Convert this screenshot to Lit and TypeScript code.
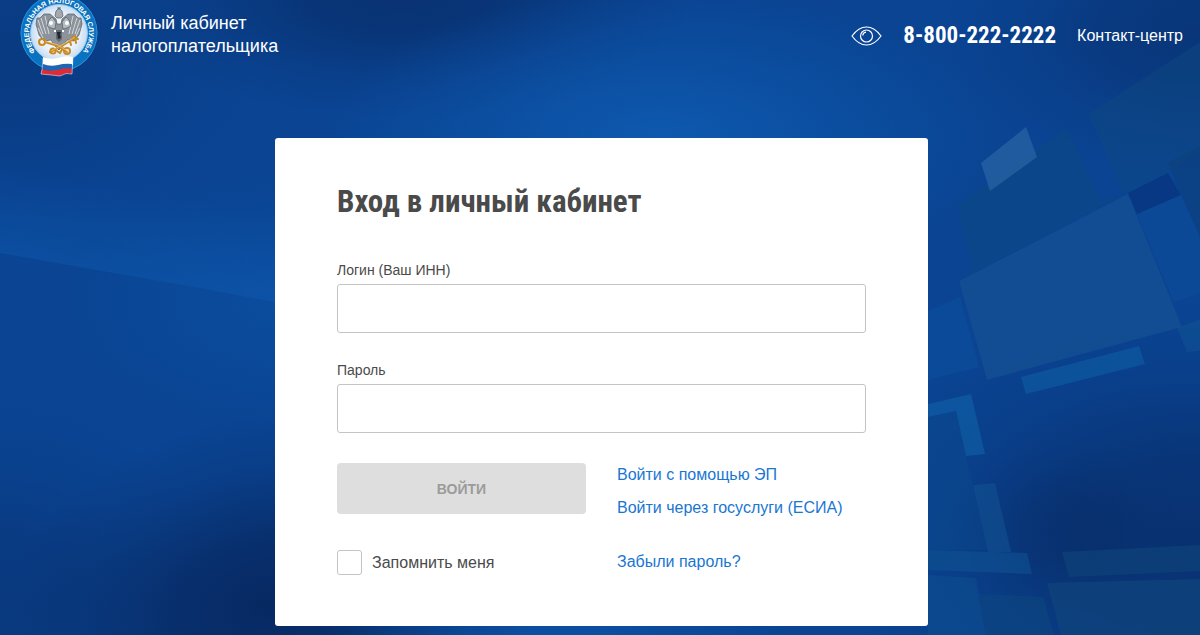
import { LitElement, html, css, svg } from "lit";
import { customElement, state } from "lit/decorators.js";

const shade = (points: string, fill: string, opacity: number) =>
  svg`<polygon points=${points} fill=${fill} fill-opacity=${opacity}></polygon>`;

@customElement("page-backdrop")
class PageBackdrop extends LitElement {
  static styles = css`
    :host {
      display: block;
      overflow: hidden;
      background: #0a4493;
    }
    .art {
      display: block;
      width: 100%;
      height: 100%;
    }
  `;

  render() {
    return html`<svg class="art" viewBox="0 0 1200 635" preserveAspectRatio="xMidYMid slice" aria-hidden="true">
      <defs>
        <radialGradient id="glow"><stop offset="0" stop-color="#0e5db4"></stop><stop offset=".5" stop-color="#0e5db4" stop-opacity=".5"></stop><stop offset="1" stop-color="#0e5db4" stop-opacity="0"></stop></radialGradient>
        <radialGradient id="dark"><stop offset="0" stop-color="#072459"></stop><stop offset=".35" stop-color="#072459" stop-opacity=".75"></stop><stop offset=".7" stop-color="#072459" stop-opacity=".25"></stop><stop offset="1" stop-color="#072459" stop-opacity="0"></stop></radialGradient>
        <linearGradient id="beam" gradientUnits="userSpaceOnUse" x1="150" y1="285" x2="166" y2="195"><stop offset="0" stop-color="#0e5db4" stop-opacity=".4"></stop><stop offset="1" stop-color="#0e5db4" stop-opacity="0"></stop></linearGradient>
      </defs>
      <rect width="1200" height="635" fill="#0a4493"></rect>
      <ellipse cx="0" cy="60" rx="260" ry="170" fill="url(#dark)" opacity=".3"></ellipse>
      <ellipse cx="400" cy="-10" rx="300" ry="130" fill="url(#dark)" opacity=".6"></ellipse>
      <ellipse cx="660" cy="140" rx="340" ry="150" fill="url(#glow)" opacity=".85"></ellipse>
      <ellipse cx="290" cy="300" rx="230" ry="130" fill="url(#glow)" opacity=".35"></ellipse>
      <ellipse cx="270" cy="605" rx="280" ry="190" fill="url(#dark)" opacity=".85" transform="rotate(-12 270 605)"></ellipse>
      <ellipse cx="0" cy="600" rx="220" ry="200" fill="url(#dark)" opacity=".35"></ellipse>
      <ellipse cx="560" cy="640" rx="240" ry="60" fill="url(#glow)" opacity=".5"></ellipse>
      <ellipse cx="1200" cy="30" rx="260" ry="150" fill="url(#dark)" opacity=".45"></ellipse>
      <ellipse cx="1190" cy="540" rx="360" ry="240" fill="url(#dark)" opacity=".6"></ellipse>
      <ellipse cx="1070" cy="530" rx="110" ry="90" fill="url(#dark)" opacity=".3"></ellipse>
      <polygon points="0,100 275,100 275,302 200,288 0,253" fill="url(#beam)"></polygon>
      ${shade("957,205 1067,128 1100,200 1124,194 959,281 973,270", "#0d4a80", 0.4)}
      ${shade("1088,114 1200,42 1200,150 1168,173 1124,194", "#104a80", 0.45)}
      ${shade("1128,193 1168,173 1181,195 1137,214", "#07307a", 0.6)}
      ${shade("1168,163 1200,146 1200,237 1181,195", "#0c4078", 0.5)}
      ${shade("1137,214 1181,195 1200,237 1200,293 1174,302", "#0c529a", 0.4)}
      ${shade("959,281 1128,194 1182,327 987,380", "#195594", 0.5)}
      ${shade("1177,328 1200,319 1200,351 1187,352", "#105494", 0.5)}
      ${shade("981,163 1026,127 1037,157 990,191", "#2e6aa6", 0.6)}
      ${shade("928,311 960,297 979,367 928,380", "#0d559f", 0.4)}
      ${shade("1021,377 1139,346 1145,364 1026,394", "#0e60a8", 0.55)}
      ${shade("928,404 971,394 985,454 966,456 956,411 928,417", "#0f62a8", 0.6)}
      ${shade("928,417 956,411 966,456 988,550 928,550", "#0c5090", 0.3)}
      ${shade("973,485 995,483 1011,552 988,552", "#115090", 0.65)}
      ${shade("928,550 1027,553 1032,574 928,570", "#0e5090", 0.65)}
      ${shade("928,575 976,578 986,635 928,635", "#0e5090", 0.5)}
      ${shade("979,594 1043,597 1054,635 986,635", "#0d467e", 0.6)}
      ${shade("1062,552 1200,545 1200,571 1069,577", "#0f4479", 0.65)}
      ${shade("1047,583 1200,579 1200,635 1061,635", "#0f457c", 0.7)}
    </svg>`;
  }
}

@customElement("service-emblem")
class ServiceEmblem extends LitElement {
  static styles = css`
    :host {
      display: block;
    }
    .emblem {
      display: block;
    }
    .ring {
      font: bold 7px "Liberation Sans", Arial, sans-serif;
      fill: #ffffff;
    }
  `;

  render() {
    return html`<svg class="emblem" width="79" height="77" viewBox="20 0 79 77" role="img" aria-label="Федеральная налоговая служба">
      <defs>
        <radialGradient id="disc"><stop offset="0" stop-color="#ffffff"></stop><stop offset=".7" stop-color="#e8f1fa"></stop><stop offset="1" stop-color="#c5dcf2"></stop></radialGradient>
        <path id="arc" d="M35.400 51.500 A 30 30 0 1 1 80 54.400"></path>
      </defs>
      <circle cx="59" cy="33" r="38.5" fill="#0a72c0"></circle>
      <circle cx="59" cy="33" r="38" fill="none" stroke="#2b8ed6"></circle>
      <circle cx="59" cy="33" r="28.5" fill="url(#disc)" stroke="#8fc3ea" stroke-width="1"></circle>
      <text class="ring"><textPath href="#arc">ФЕДЕРАЛЬНАЯ НАЛОГОВАЯ СЛУЖБА</textPath></text>
      <g fill="#8d939b" stroke="#555c66" stroke-width=".7" stroke-linejoin="round">
        <path d="M56 19 L50 14 L44 14 L40 18 L37 18 L36 24 L39 35 L44 41 L51 40 L55 46 L59 50 L63 46 L67 40 L74 41 L79 35 L82 24 L81 18 L78 18 L74 14 L68 14 L62 19 L61 24 L57 24Z"></path>
        <path d="M38 20 L43 34 M41 18 L46 34 M45 16 L49 34 M80 20 L75 34 M77 18 L72 34 M73 16 L69 34 M38 28 L43 38 M80 28 L75 38" stroke="#d5d9de" stroke-width="1" fill="none"></path>
        <path d="M49 20 L52 17 L56 22 L55 29 L51 28 L47 26Z M69 20 L66 17 L62 22 L63 29 L67 28 L71 26Z" fill="#b7bcc3"></path>
        <path d="M55 16 L56 11 L59 8 L62 11 L63 16 L61 18 L57 18Z M59 7 V10 M57 8 H61" fill="#a4a9b0"></path>
      </g>
      <g fill="#ffffff"><circle cx="51" cy="23" r="2"></circle><circle cx="67" cy="23" r="2"></circle><path d="M54 30 H57 V32 H54Z M61 30 H64 V32 H61Z M57 36 H60 V39 H57Z"></path></g>
      <path d="M56 30 H62 V39 L59 42 L56 39Z" fill="#656a72"></path>
      <path d="M57 32 L61 32 L60 34 L61 38 L58 39Z" fill="#22272f"></path>
      <g fill="none" stroke="#c98a24" stroke-width="2" stroke-linecap="round">
        <circle cx="42" cy="42" r="3"></circle><path d="M45 42 L58 46 L67 52 M50 52 L62 46 L75 38 M72 37 L78 39 M75 36 L76 43 M70 41 L71 45"></path>
        <circle cx="53" cy="51" r="2.5"></circle><circle cx="67" cy="51" r="3"></circle><path d="M57 51 L60 53 L63 48"></path>
      </g>
      <path d="M45 41 L58 45 L67 51 M51 51 L62 45 L75 37" fill="none" stroke="#efc568" stroke-width=".8"></path>
      <path d="M43 57 Q50 60 58 58 Q65 55 73 57 V65 Q65 64 58 66 Q50 68 43 65Z" fill="#ffffff"></path>
      <path d="M43 64 Q50 67 58 65 Q65 63 72 64 V69 Q65 67 58 70 Q50 72 42 69Z" fill="#2064b4"></path>
      <path d="M42 69 Q50 72 58 70 Q65 67 72 69 V74 Q66 72 60 76 Q52 75 41 74Z" fill="#de2b35"></path>
      <path d="M43 58 L42 70 L41 74 Q52 75 60 76 Q66 72 72 74 L73 57" fill="none" stroke="#dfe8f4" stroke-width=".6"></path>
    </svg>`;
  }
}

@customElement("app-root")
class AppRoot extends LitElement {
  static styles = css`
    :host {
      display: block;
      position: relative;
      min-height: 100vh;
      font-family: "Liberation Sans", Arial, sans-serif;
      font-size: 16px;
      line-height: 24px;
      color: #4a4a4a;
      box-sizing: border-box;
      padding: 0 17px 9px 20px;
    }
    *,
    *::before {
      box-sizing: border-box;
    }
    .backdrop {
      position: absolute;
      inset: 0;
      z-index: -1;
    }
    a {
      color: #1976d2;
      text-decoration: none;
    }
    a:hover {
      text-decoration: underline;
    }
    .header {
      display: flex;
      justify-content: space-between;
      align-items: flex-start;
      margin-bottom: 61px;
    }
    .brand {
      display: flex;
      gap: 12px;
      font-size: 18px;
      line-height: 23px;
    }
    .brand,
    .contacts,
    .contacts a {
      color: #ffffff;
    }
    .brand-name {
      padding-top: 12px;
    }
    .contacts {
      display: flex;
      align-items: center;
      gap: 21px;
      height: 72px;
    }
    .vision {
      display: block;
      padding: 0;
      border: 0;
      background: none;
      cursor: pointer;
    }
    .vision svg {
      display: block;
    }
    .contacts .phone,
    .title {
      font-family: "Roboto Condensed", "Open Sans Condensed", "Liberation Sans Narrow", "DejaVu Sans Condensed", sans-serif;
      font-weight: bold;
    }
    .contacts .phone {
      font-size: 23px;
    }
    .card {
      max-width: 653px;
      margin: 0 auto;
      padding: 44px 62px 51px;
      background: #ffffff;
      border-radius: 3px;
    }
    .title {
      margin: 0 0 36px;
      font-size: 31px;
      line-height: 40px;
    }
    .field {
      display: block;
      margin-bottom: 25px;
    }
    .label {
      display: block;
      font-size: 14px;
      line-height: 24px;
      margin-bottom: 2px;
    }
    .input {
      display: block;
      width: 100%;
      height: 49px;
      padding: 0 16px;
      border: 1px solid #c4c4c4;
      border-radius: 3px;
      font: inherit;
      color: inherit;
      background: #ffffff;
    }
    .actions {
      display: grid;
      grid-template-columns: 1fr 1fr;
      column-gap: 31px;
      row-gap: 30px;
      padding-top: 5px;
    }
    .submit {
      height: 51px;
      border: 0;
      border-radius: 4px;
      background: #dedede;
      color: #9b9b9b;
      font: bold 14px "Liberation Sans", Arial, sans-serif;
    }
    .links {
      display: flex;
      flex-direction: column;
      gap: 9px;
    }
    .remember {
      display: flex;
      align-items: center;
      gap: 10px;
    }
    .check {
      appearance: none;
      width: 25px;
      height: 25px;
      margin: 0;
      border: 1px solid #c4c4c4;
      border-radius: 3px;
      background: #ffffff;
    }
    .check:checked {
      background: #1976d2;
    }
  `;

  @state() private login = "";
  @state() private password = "";

  render() {
    return html`
      <page-backdrop class="backdrop"></page-backdrop>
      <header class="header">
        <div class="brand">
          <service-emblem></service-emblem>
          <div class="brand-name">Личный кабинет<br />налогоплательщика</div>
        </div>
        <div class="contacts">
          <button class="vision" type="button" aria-label="Версия для слабовидящих">
            <svg width="31" height="20" viewBox="0 0 31 20" fill="none" stroke="#ffffff" stroke-width="1.2">
              <path d="M1 10 Q7.500 1 15.500 1 T30 10 Q23.500 19 15.500 19 T1 10Z"></path>
              <circle cx="15.500" cy="10" r="6"></circle>
              <path d="M11.800 9.500 Q12 6.500 15 6.200"></path>
            </svg>
          </button>
          <a class="phone" href="tel:88002222222">8-800-222-2222</a>
          <a href="#contact">Контакт-центр</a>
        </div>
      </header>
      <main>
        <form class="card" @submit=${(e: Event) => e.preventDefault()}>
          <h1 class="title">Вход в личный кабинет</h1>
          <div class="field">
            <label class="label" for="login">Логин (Ваш ИНН)</label>
            <input class="input" id="login" type="text" autocomplete="username" .value=${this.login}
              @input=${(e: Event) => (this.login = (e.target as HTMLInputElement).value)} />
          </div>
          <div class="field">
            <label class="label" for="password">Пароль</label>
            <input class="input" id="password" type="password" autocomplete="current-password" .value=${this.password}
              @input=${(e: Event) => (this.password = (e.target as HTMLInputElement).value)} />
          </div>
          <div class="actions">
            <button class="submit" type="submit" ?disabled=${!this.login || !this.password}>ВОЙТИ</button>
            <div class="links">
              <a href="#signature">Войти с помощью ЭП</a>
              <a href="#esia">Войти через госуслуги (ЕСИА)</a>
            </div>
            <label class="remember"><input class="check" type="checkbox" />Запомнить меня</label>
            <a href="#restore">Забыли пароль?</a>
          </div>
        </form>
      </main>
    `;
  }
}
